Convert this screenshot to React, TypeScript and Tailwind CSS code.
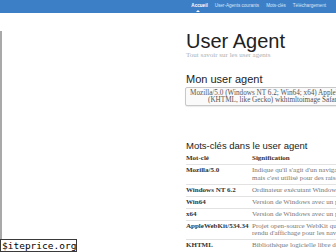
import React from "react";

const serif = { fontFamily: '"Liberation Serif", "Times New Roman", serif' };
const sans = { fontFamily: '"Liberation Sans", Arial, sans-serif' };

const rows: { k: string; v: string[] }[] = [
  {
    k: "Mozilla/5.0",
    v: [
      "Indique qu'il s'agit d'un navigateur compatible Mozilla,",
      "mais c'est utilisé pour des raisons historiques",
    ],
  },
  { k: "Windows NT 6.2", v: ["Ordinateur exécutant Windows 8"] },
  { k: "Win64", v: ["Version de Windows avec un processeur 64 bits"] },
  { k: "x64", v: ["Version de Windows avec un processeur 64 bits"] },
  {
    k: "AppleWebKit/534.34",
    v: [
      "Projet open-source WebKit qui fournit un moteur de",
      "rendu d'affichage pour les navigateurs",
    ],
  },
  { k: "KHTML", v: ["Bibliothèque logicielle libre de rendu HTML"] },
];

export default function App() {
  return (
    <div className="relative w-[336px] h-[252px] overflow-hidden bg-white">
      {/* nav */}
      <div
        className="relative h-[13px] bg-[#3d7fc7] flex items-center justify-end pr-[10px] gap-[7px] text-[4.6px] text-[#d8e6f7] whitespace-nowrap"
        style={sans}
      >
        <span className="relative text-white font-bold">
          Accueil
          <span className="absolute left-[5px] top-[7px] w-0 h-0 border-l-[2px] border-r-[2px] border-b-[2px] border-l-transparent border-r-transparent border-b-white" />
        </span>
        <span>User-Agents courants</span>
        <span>Mots-clés</span>
        <span>Téléchargement</span>
      </div>

      {/* main */}
      <div className="h-[239px] border-l-[2px] border-[#a9a9a9] pl-[184px] whitespace-nowrap">
        <h1
          className="mt-[18px] text-[20px] leading-[20px] text-[#222]"
          style={sans}
        >
          User Agent
        </h1>
        <div
          className="mt-[1px] text-[7px] leading-[7px] text-[#b0b0b0]"
          style={serif}
        >
          Tout savoir sur les user agents
        </div>

        <h2
          className="mt-[15px] text-[11px] leading-[11px] text-[#222]"
          style={sans}
        >
          Mon user agent
        </h2>
        <div
          className="mt-[2px] -ml-[1px] w-[230px] border border-[#c8c8c8] rounded-[2px] bg-[#fafafa] pl-[4px] py-[1.5px] text-[7.2px] leading-[7px] text-[#555] shadow-[0_1px_1px_rgba(0,0,0,0.08)]"
          style={serif}
        >
          <div>Mozilla/5.0 (Windows NT 6.2; Win64; x64) AppleWebKit/534.34</div>
          <div className="ml-[18px]">(KHTML, like Gecko) wkhtmltoimage Safari/534.34</div>
        </div>

        <h3
          className="mt-[35px] text-[9.5px] leading-[10px] text-[#222]"
          style={sans}
        >
          Mots-clés dans le user agent
        </h3>
        <div className="mt-[2.25px] text-[7px] leading-[7.5px]" style={serif}>
          <div className="flex pt-[2px] pb-[1.5px]">
            <div className="w-[66px] font-bold text-[#333]">Mot-clé</div>
            <div className="font-bold text-[#333]">Signification</div>
          </div>
          {rows.map((r) => (
            <div
              key={r.k}
              className="flex border-t border-[#e2e2e2] pt-[2px] pb-[1.5px]"
            >
              <div className="w-[66px] shrink-0 font-bold text-[#333]">{r.k}</div>
              <div className="text-[#777]">
                {r.v.map((l) => (
                  <div key={l}>{l}</div>
                ))}
              </div>
            </div>
          ))}
        </div>
      </div>

      {/* watermark */}
      <div
        className="absolute left-0 bottom-0 h-[13px] w-[77px] border border-[#3a3a3a] bg-white text-[9.5px] leading-[11px] text-black pl-[1px]"
        style={{ fontFamily: '"DejaVu Sans Mono", "Liberation Mono", monospace' }}
      >
        $iteprice.org
      </div>
    </div>
  );
}
